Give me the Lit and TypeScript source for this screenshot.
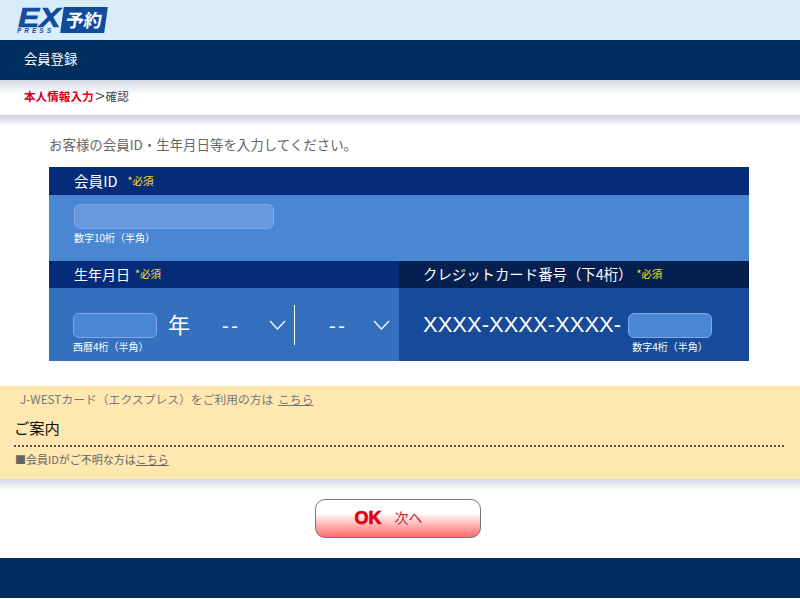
import { LitElement, html, css } from "lit";
import { customElement } from "lit/decorators.js";

@customElement("app-root")
export class AppRoot extends LitElement {
  static styles = css`
    :host { display: block; width: 800px; height: 599px; overflow: hidden; background: #fff; font-family: "Noto Sans CJK JP", "Liberation Sans", sans-serif; color: #666; }
    * { box-sizing: border-box; }
    .top { height: 40px; background: #d9ecfb; padding: 7px 0 0 17px; display: flex; }
    .logo { width: 92px; height: 27px; display: flex; align-items: flex-start; }
    .ex-block { width: 43px; flex: none; display: flex; flex-direction: column; color: #0f4c9c; font-style: italic; font-weight: 700; font-family: "Liberation Sans", sans-serif; }
    .ex { font-size: 28px; line-height: 21px; height: 21px; margin-left: 1px; transform: scaleX(1.14); transform-origin: left center; -webkit-text-stroke: 0.6px #0f4c9c; white-space: nowrap; }
    .press { font-size: 6.5px; line-height: 6px; letter-spacing: 3px; white-space: nowrap; }
    .yoyaku { width: 44px; height: 26px; margin-left: 2px; background: #0f4c9c; color: #fff; font-size: 18px; line-height: 25px; font-weight: 700; text-align: center; transform: skewX(-8deg); white-space: nowrap; }
    .title { height: 40px; background: #002f5f; color: #fff; font-size: 13.3px; line-height: 38px; padding-left: 24px; }
    .crumb { height: 35px; background: linear-gradient(#d5d8e4, #fff 14px); font-size: 11.6px; padding: 0 0 3px 24px; color: #445; display: flex; align-items: center; }
    .crumb b { color: #d8001a; font-weight: 700; }
    .crumb .gt { color: #555; font-size: 14px; width: 12px; text-align: center; font-family: "Liberation Sans", sans-serif; transform: scaleX(1.2); }
    .band { height: 11px; background: linear-gradient(#c9cddd, #fff); }
    .lead { height: 41px; padding: 9px 0 0 49px; font-size: 13.45px; line-height: 19px; color: #666; white-space: nowrap; }
    .form { margin-left: 49px; width: 700px; }
    .head { background: #042c78; color: #fff; font-size: 14px; display: flex; align-items: center; white-space: nowrap; }
    .req { color: #ffe21f; font-size: 10.5px; font-weight: 400; }
    .h1 { height: 28px; padding: 0 0 2px 25px; font-size: 14.6px; gap: 10px; }
    .p1 { height: 66px; background: #4a86d2; padding: 9px 0 0 25px; }
    .field { border-radius: 6px; border: 1px solid #7ea8e6; display: block; }
    .f1 { width: 200px; height: 25px; background: #6a98de; }
    .hint { color: #fff; font-size: 10px; line-height: 13px; white-space: nowrap; }
    .p1 .hint { margin-top: 2px; }
    .cols { display: grid; grid-template-columns: 350px 350px; }
    .h2 { height: 27px; padding: 0 0 2px 25px; gap: 5px; }
    .h3 { height: 27px; padding: 0 0 2px 24px; background: #05204f; font-size: 14.4px; gap: 4px; }
    .p2 { height: 73px; background: #3570bf; padding: 25px 0 0 24px; display: flex; }
    .p3 { height: 73px; background: #174a98; padding: 25px 0 0 24px; display: flex; }
    .fgroup { display: flex; flex-direction: column; }
    .f2 { width: 84px; height: 25px; background: #4a86d2; }
    .fgroup .hint { margin-top: 2px; }
    .nen { color: #fff; font-size: 22px; line-height: 20px; margin-left: 11px; width: 32px; flex: none; }
    .sel { display: flex; color: #fff; font-size: 20px; line-height: 22px; height: 40px; margin-top: -8px; }
    .sel .dash { padding-top: 10px; letter-spacing: 2.5px; font-family: "Liberation Sans", sans-serif; }
    .s1 { width: 95px; padding-left: 22px; justify-content: space-between; border-right: 1px solid #fff; align-items: flex-start; }
    .s2 { width: 96px; padding-left: 34px; justify-content: space-between; align-items: flex-start; }
    .chev { width: 17px; height: 10px; margin: 15px 8px 0 0; flex: none; }
    .s2 .chev { margin-right: 1px; }
    .card { color: #fff; font-size: 22px; line-height: 24px; font-family: "Liberation Sans", sans-serif; white-space: nowrap; width: 205px; flex: none; }
    .center { text-align: center; }
    .notice { margin-top: 25px; height: 93px; background: #ffe7b0; padding: 4px 16px 0 15px; }
    .jw { font-size: 11.8px; line-height: 18px; color: #777; padding-left: 5px; white-space: nowrap; }
    a { color: inherit; text-decoration: underline; }
    .jw a { margin-left: 2px; }
    .guide { color: #111; font-size: 15.3px; line-height: 20px; margin-top: 9px; height: 30px; border-bottom: 2px dotted #555; margin-left: -1px; }
    .unk { font-size: 11px; line-height: 16px; color: #666; margin-top: 4px; }
    .band2 { height: 12px; background: linear-gradient(#d5d8e8, #fff); }
    .actions { height: 67px; display: flex; justify-content: center; padding: 8px 4px 0 0; }
    .ok { width: 166px; height: 39px; border: 1px solid #777; border-radius: 10px; background: linear-gradient(#fff 35%, #ff6a6a); display: flex; justify-content: center; align-items: center; gap: 13px; padding-right: 19px; }
    .ok b { color: #e00012; font-size: 18px; font-weight: 700; font-family: "Liberation Sans", sans-serif; -webkit-text-stroke: 0.7px #e00012; }
    .ok span { color: #c8202c; font-size: 14px; margin-bottom: 4px; }
    .foot { height: 40px; background: #002f5f; }
  `;

  private chev() {
    return html`<svg class="chev" viewBox="0 0 17 10" fill="none" stroke="#fff" stroke-width="1.2"><path d="M1 1l7.5 8L16 1"/></svg>`;
  }

  render() {
    return html`
      <div class="top">
        <div class="logo">
          <div class="ex-block"><span class="ex">EX</span><span class="press">PRESS</span></div>
          <div class="yoyaku">予約</div>
        </div>
      </div>
      <div class="title">会員登録</div>
      <div class="crumb"><b>本人情報入力</b><span class="gt">&gt;</span>確認</div>
      <div class="band"></div>
      <div class="lead">お客様の会員ID・生年月日等を入力してください。</div>
      <div class="form">
        <div class="head h1">会員ID <span class="req">*必須</span></div>
        <div class="p1">
          <span class="field f1"></span>
          <div class="hint">数字10桁（半角）</div>
        </div>
        <div class="cols">
          <div class="head h2">生年月日 <span class="req">*必須</span></div>
          <div class="head h3">クレジットカード番号（下4桁） <span class="req">*必須</span></div>
          <div class="p2">
            <div class="fgroup"><span class="field f2"></span><div class="hint">西暦4桁（半角）</div></div>
            <div class="nen">年</div>
            <div class="sel s1"><span class="dash">--</span>${this.chev()}</div>
            <div class="sel s2"><span class="dash">--</span>${this.chev()}</div>
          </div>
          <div class="p3">
            <div class="card">XXXX-XXXX-XXXX-</div>
            <div class="fgroup center"><span class="field f2"></span><div class="hint">数字4桁（半角）</div></div>
          </div>
        </div>
      </div>
      <div class="notice">
        <div class="jw">J-WESTカード（エクスプレス）をご利用の方は <a href="#">こちら</a></div>
        <div class="guide">ご案内</div>
        <div class="unk">■会員IDがご不明な方は<a href="#">こちら</a></div>
      </div>
      <div class="band2"></div>
      <div class="actions"><div class="ok"><b>OK</b><span>次へ</span></div></div>
      <div class="foot"></div>
    `;
  }
}
